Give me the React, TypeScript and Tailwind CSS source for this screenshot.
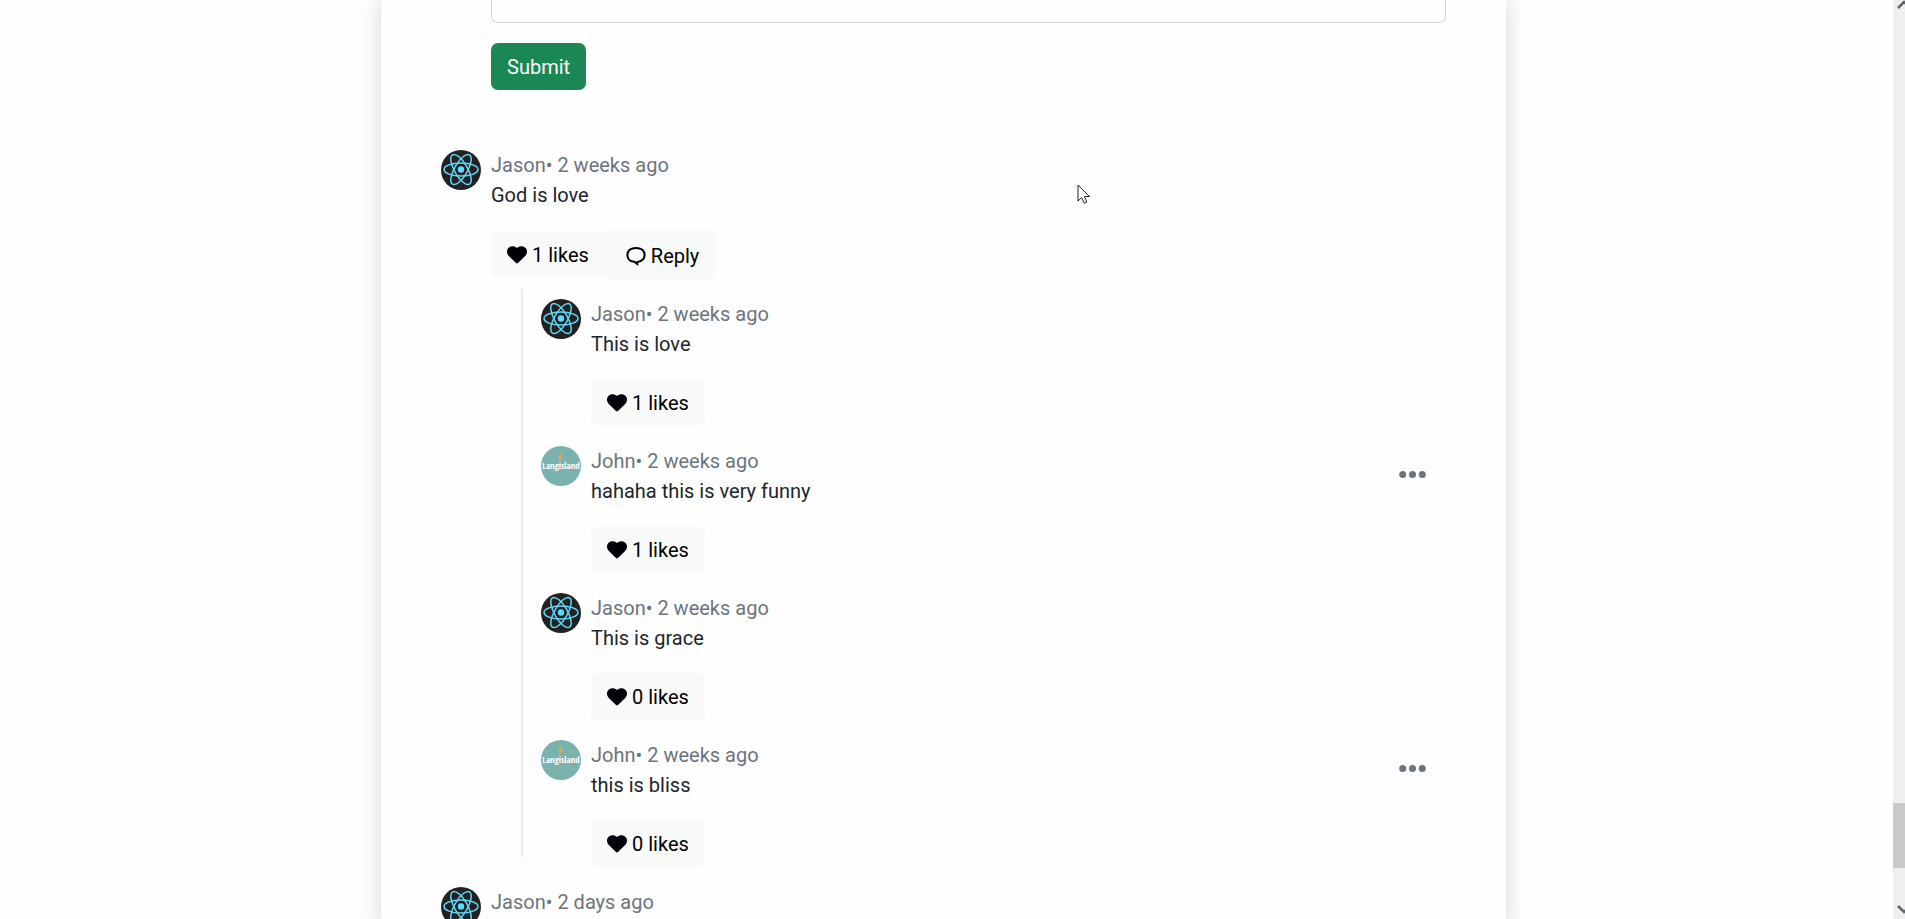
import React from "react";

type Person = "Jason" | "John";

interface CommentData {
  author: Person;
  when: string;
  text?: string;
  likes?: number;
  own?: boolean;
}

const replies: CommentData[] = [
  { author: "Jason", when: "2 weeks ago", text: "This is love", likes: 1 },
  { author: "John", when: "2 weeks ago", text: "hahaha this is very funny", likes: 1, own: true },
  { author: "Jason", when: "2 weeks ago", text: "This is grace", likes: 0 },
  { author: "John", when: "2 weeks ago", text: "this is bliss", likes: 0, own: true },
];

function ReactAvatar() {
  return (
    <svg viewBox="0 0 40 40" className="size-10 shrink-0" aria-hidden="true">
      <circle cx="20" cy="20" r="20" fill="#222222" />
      <circle cx="20" cy="19.5" r="3.2" fill="#61dafb" />
      <g fill="none" stroke="#61dafb" strokeWidth="1.5">
        <ellipse cx="20" cy="19.5" rx="17" ry="6.5" />
        <ellipse cx="20" cy="19.5" rx="17" ry="6.5" transform="rotate(60 20 19.5)" />
        <ellipse cx="20" cy="19.5" rx="17" ry="6.5" transform="rotate(120 20 19.5)" />
      </g>
    </svg>
  );
}

function IslandAvatar() {
  return (
    <span className="relative flex size-10 shrink-0 items-center justify-center overflow-hidden rounded-full bg-[#7ab3ad]">
      <span className="font-['Open_Sans_Condensed','Open_Sans',sans-serif] text-[9px] leading-10 font-bold whitespace-nowrap text-white">
        Langisland
      </span>
      <svg viewBox="0 0 40 40" className="absolute inset-0 size-10" aria-hidden="true">
        <path d="M19.3 7C22 9 21.5 13 19.3 13.5C17 13 17.3 9 19.3 7Z" fill="#e9a545" />
      </svg>
    </span>
  );
}

function Heart() {
  return (
    <svg viewBox="0 0 20 18" className="h-[18px] w-5 shrink-0" aria-hidden="true">
      <path
        d="M10 17.6C9.700 17.600 9.300 17.400 9 17.100L1.600 9.700C-.5 7.500-.5 3.900 1.400 1.900C3.500-.2 7-.2 9 1.300L10 2L11 1.300C13-.2 16.500-.2 18.600 1.900C20.500 3.900 20.500 7.500 18.400 9.700L11 17.100C10.700 17.400 10.300 17.600 10 17.600Z"
        fill="#000008"
      />
    </svg>
  );
}

function Bubble() {
  return (
    <svg viewBox="0 0 20 20" className="size-5 shrink-0" aria-hidden="true">
      <path
        d="M11.3 16V18L8.200 15.700C4 15.500 1.400 12.800 1.400 9C1.400 4.800 4.500 1.900 10 1.900C15.500 1.900 18.600 4.800 18.600 9C18.600 12.500 16.200 15.200 11.300 16Z"
        fill="none"
        stroke="#000"
        strokeWidth="2"
      />
    </svg>
  );
}

function LikeButton({ likes }: { likes: number }) {
  return (
    <button className="flex h-[47px] items-center gap-[5px] rounded-[7px] bg-[#f8faf9] px-4 text-black">
      <Heart />
      <span>{likes} likes</span>
    </button>
  );
}

function CommentBody({ data, replyable }: { data: CommentData; replyable?: boolean }) {
  return (
    <div className="flex items-start gap-[10px]">
      {data.author === "Jason" ? <ReactAvatar /> : <IslandAvatar />}
      <div className="flex-1">
        <p className="text-[#6c757d]">
          {data.author}• {data.when}
        </p>
        {data.text && <p>{data.text}</p>}
        {data.likes !== undefined && (
          <div className="mt-5 flex items-center">
            <LikeButton likes={data.likes} />
            {replyable && (
              <button className="flex h-[49px] items-center gap-[5px] rounded-[7px] bg-[#f8faf9] pt-[2px] pr-4 pl-[21px] text-black">
                <Bubble />
                <span>Reply</span>
              </button>
            )}
          </div>
        )}
      </div>
      {data.own && (
        <button aria-label="Comment options" className="mt-5 mr-5 flex h-4 items-center">
          <svg viewBox="0 0 28 8" className="h-2 w-7" fill="#6c757d" aria-hidden="true">
            <circle cx="4.7" cy="4.4" r="3.5" />
            <circle cx="14.5" cy="4.4" r="3.5" />
            <circle cx="24.3" cy="4.4" r="3.5" />
          </svg>
        </button>
      )}
    </div>
  );
}

function ScrollTrack() {
  return (
    <div className="relative flex w-3 shrink-0 flex-col justify-between overflow-hidden bg-[#efefef]" aria-hidden="true">
      <svg viewBox="0 0 12 12" className="size-3" fill="none" stroke="#5c686b" strokeWidth="2.5">
        <path d="M5 8L11 2L17 8" />
      </svg>
      <div className="absolute top-[803px] h-[65px] w-3 bg-[#c9c9c9]" />
      <svg viewBox="0 0 12 16" className="h-4 w-3" fill="none" stroke="#5c686b" strokeWidth="2.5">
        <path d="M5 3L11 9L17 3" />
      </svg>
    </div>
  );
}

export default function App() {
  return (
    <div className="relative flex h-screen overflow-hidden bg-[#fefefe] font-[Roboto,sans-serif] text-[20px] leading-[30px] text-[#212529]">
      <div className="flex-1 overflow-hidden pr-[6px]">
        <main className="mx-auto min-h-screen max-w-[1125px] bg-[#fefefe] px-[60px] shadow-[0_0_20px_rgba(0,0,0,0.16)]">
          <form className="flex flex-col items-start pl-[50px]" onSubmit={(e) => e.preventDefault()}>
            <textarea
              aria-label="Comment"
              className="block h-[23px] w-full resize-none rounded-b-[7px] border border-t-0 border-[#ced4da] bg-[#fefefe] outline-none"
            />
            <button className="mt-5 h-[47px] rounded-[7px] bg-[#1b8755] px-4 text-white">Submit</button>
          </form>
          <section className="mt-[60px]">
            <CommentBody data={{ author: "Jason", when: "2 weeks ago", text: "God is love", likes: 1 }} replyable />
            <div className="mt-[10px] ml-20 flex flex-col border-l-2 border-[#ebebeb] pt-[10px] pl-[18px]">
              <div className="-mb-[10px] flex flex-col gap-5">
                {replies.map((reply, i) => (
                  <CommentBody key={i} data={reply} />
                ))}
              </div>
            </div>
            <div className="mt-[30px]">
              <CommentBody data={{ author: "Jason", when: "2 days ago" }} />
            </div>
          </section>
        </main>
      </div>
      <ScrollTrack />
      <svg viewBox="0 0 14 21" className="absolute top-[184px] left-[1077px] h-[21px] w-[14px]" aria-hidden="true">
        <path d="M1 1V17L4.7 13.5L7.2 19.2L9.8 18.1L7.4 12.5H12.5Z" fill="#fff" stroke="#1d2433" strokeWidth="1" />
      </svg>
    </div>
  );
}
